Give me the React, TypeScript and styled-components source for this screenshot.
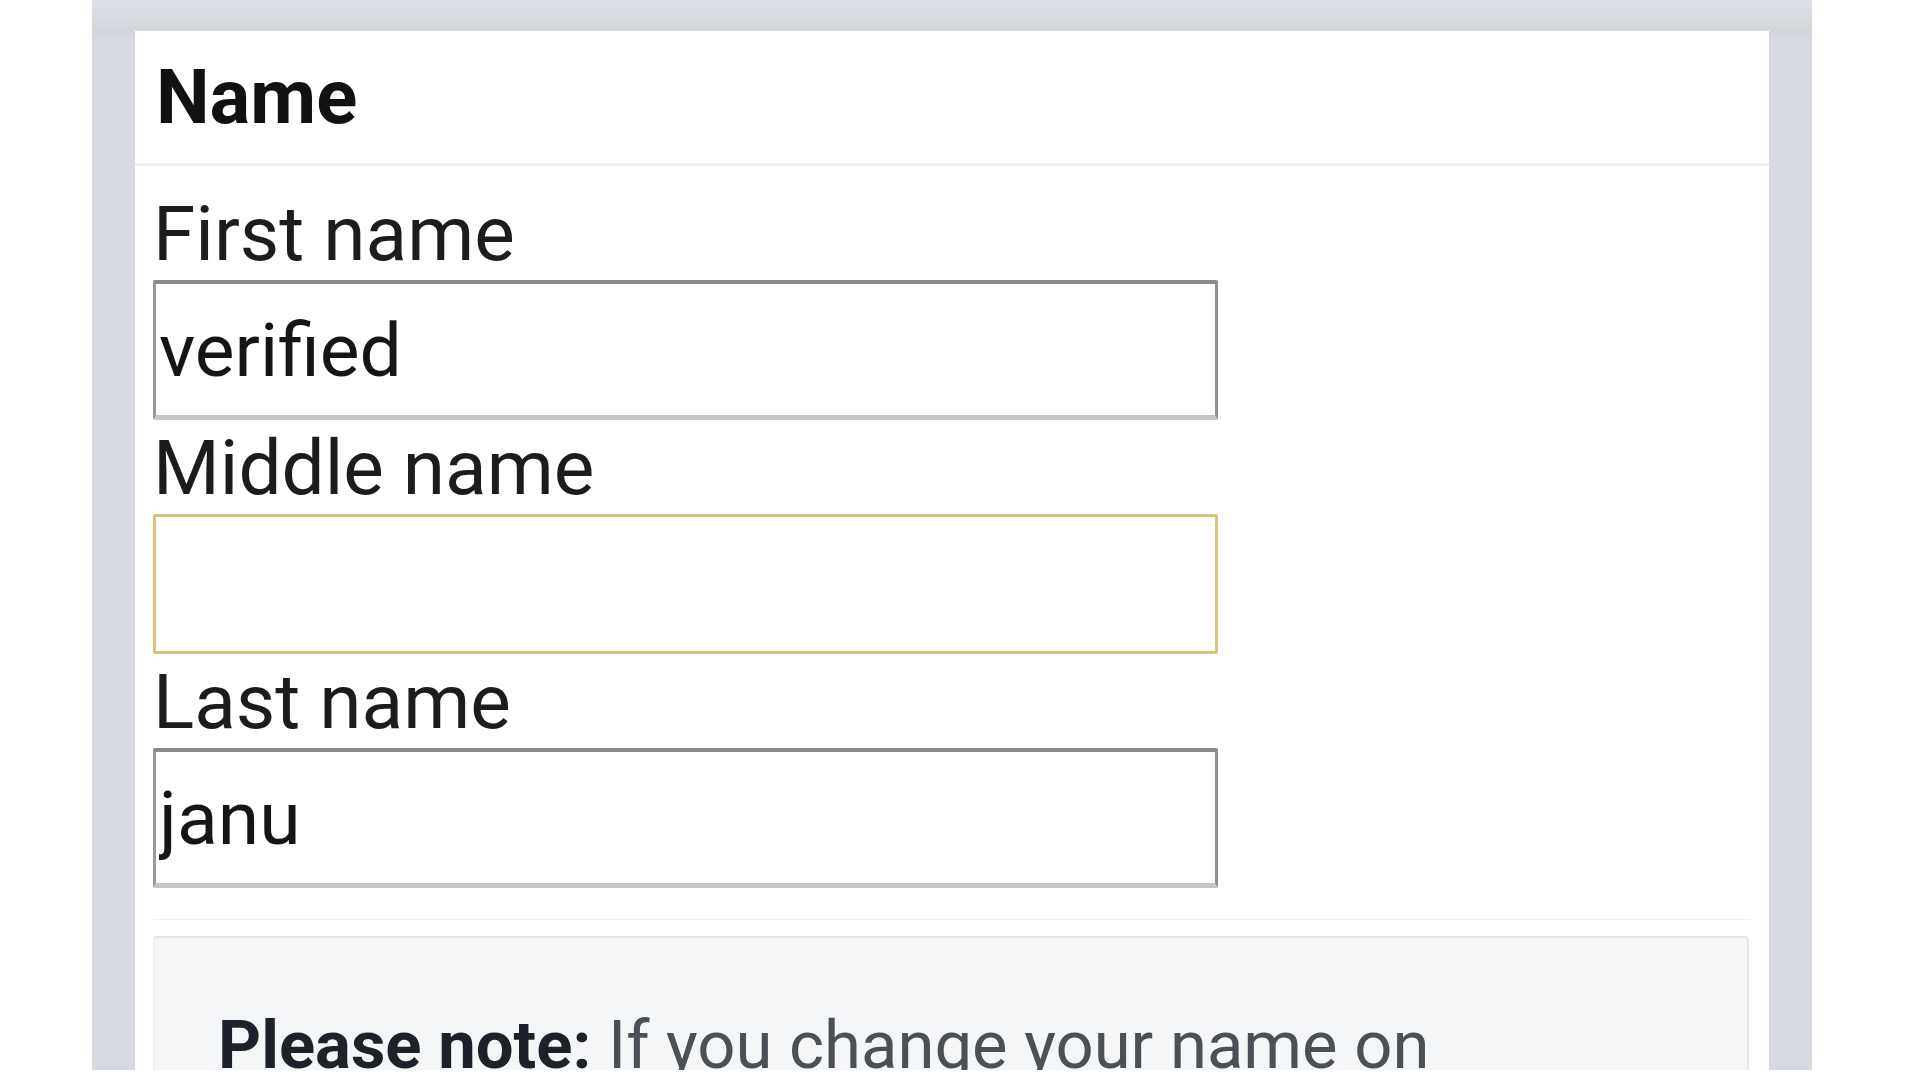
import React from 'react'
import styled, { createGlobalStyle } from 'styled-components'

const GlobalStyle = createGlobalStyle`
  html, body {
    margin: 0;
    padding: 0;
    background: #ffffff;
  }
  body {
    font-family: Roboto, "Noto Sans", "Liberation Sans", sans-serif;
  }
  * {
    box-sizing: border-box;
  }
`

type FieldProps = { label: string; value?: string; focused?: boolean }

const Field = (props: FieldProps) => (
  <FieldGroup>
    <Label>{props.label}</Label>
    <TextInput defaultValue={props.value ?? ''} focused={props.focused} readOnly />
  </FieldGroup>
)

export default function App() {
  return (
    <>
      <GlobalStyle />
      <Page>
        <Frame>
          <Panel>
            <Header>Name</Header>
            <Body>
              <Field label="First name" value="verified" />
              <Field label="Middle name" focused />
              <Field label="Last name" value="janu" />
              <Divider />
              <Note>
                <NoteText>
                  <strong>Please note:</strong> If you change your name on Facebook, you
                  can't change it again for 60 days.
                </NoteText>
              </Note>
            </Body>
          </Panel>
        </Frame>
      </Page>
    </>
  )
}

const Page = styled.div`
  width: 1920px;
  height: 1080px;
  padding-left: 92px;
  background: #ffffff;
  overflow: hidden;
`

const Frame = styled.div`
  width: 1720px;
  height: 1070px;
  padding: 31px 43px 0 43px;
  background: linear-gradient(to bottom, #dcdfe6 0px, #d8dbe2 14px, #d3d5da 31px, #d6d9df 40px);
  overflow: hidden;
`

const Panel = styled.div`
  width: 100%;
  height: 100%;
  background: #ffffff;
  display: flex;
  flex-direction: column;
`

const Header = styled.div`
  height: 135px;
  padding-left: 21px;
  font-size: 76px;
  line-height: 132px;
  font-weight: 700;
  color: #111111;
  border-bottom: 3px solid #eeeeee;
`

const Body = styled.div`
  display: flex;
  flex-direction: column;
  padding: 20px 18px 0 18px;
`

const FieldGroup = styled.div`
  display: flex;
  flex-direction: column;
  margin-top: 5px;
`

const Label = styled.label`
  font-size: 76.5px;
  line-height: 86px;
  color: #1c1c1c;
`

const TextInput = styled.input<{ focused?: boolean }>`
  width: 1065px;
  height: 140px;
  margin-top: 3px;
  padding: 0 0 0 3px;
  font-family: inherit;
  font-size: 75px;
  color: #151515;
  background: #ffffff;
  outline: none;
  border-radius: 2px;
  border-style: solid;
  border-width: ${({ focused }) => (focused ? '3px' : '4px 3px 5px 3px')};
  border-color: ${({ focused }) =>
    focused ? '#dcc47e' : '#8a8a8a #8f8f8f #c6c6c6 #9a9a9a'};
`

const Divider = styled.div`
  height: 1px;
  margin-top: 31px;
  background: #f1f1f1;
`

const Note = styled.div`
  margin-top: 16px;
  width: 1596px;
  padding: 62px 60px 40px 63px;
  background: #f5f6f7;
  border: 2px solid #e4e5e7;
  border-left-color: #eceef0;
  border-radius: 4px;
`

const NoteText = styled.p`
  margin: 0;
  font-size: 67px;
  line-height: 91px;
  color: #4b4f56;

  strong {
    color: #1d2129;
    font-weight: 700;
  }
`
